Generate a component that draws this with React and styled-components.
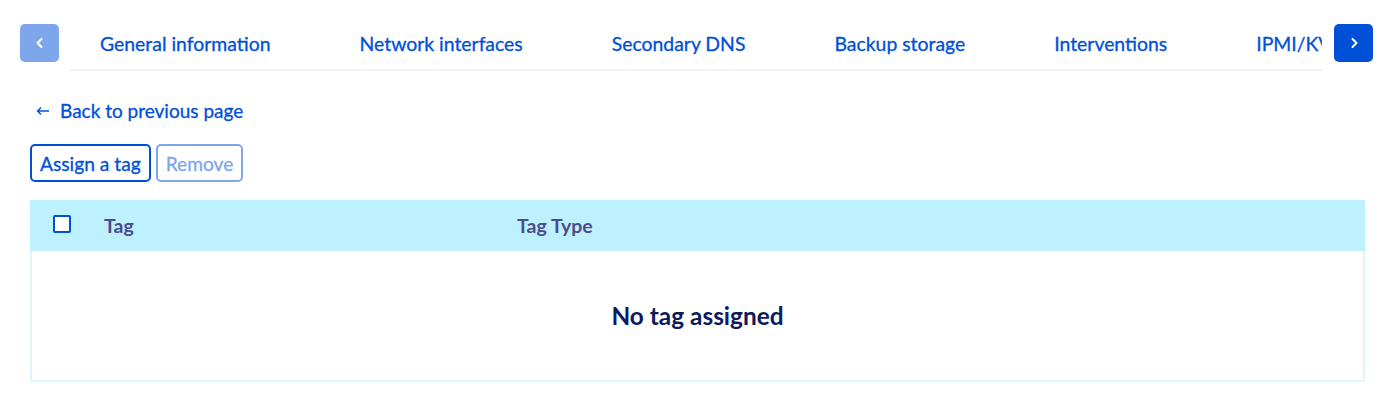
import React from "react";
import styled, { createGlobalStyle } from "styled-components";

const GlobalStyle = createGlobalStyle`
  * { box-sizing: border-box; }
  body {
    margin: 0;
    background: #fff;
    font-family: Lato, "Noto Sans", sans-serif;
  }
`;

const Page = styled.div`
  width: 1400px;
  height: 410px;
  padding: 24px 27px 0 20px;
`;

const TabBar = styled.div`
  display: flex;
  align-items: flex-start;
  height: 48px;
`;

const ArrowButton = styled.button`
  flex: none;
  width: 39px;
  height: 38px;
  border: none;
  border-radius: 5px;
  padding: 0;
  display: flex;
  align-items: center;
  justify-content: center;
  background: ${(p) => (p.$disabled ? "#7ea6eb" : "#0050d7")};
  color: #fff;
`;

const TabStrip = styled.div`
  flex: 1;
  margin: 0 12px 0 11px;
  overflow: hidden;
  display: flex;
  gap: 89px;
  padding-left: 30px;
  height: 47px;
  border-bottom: 2px solid #eff4fa;
  white-space: nowrap;
`;

const Tab = styled.a`
  flex: none;
  font-size: 19.4px;
  color: #0050d7;
  line-height: 40px;
  -webkit-text-stroke: 0.3px #0050d7;
  text-decoration: none;
`;

const Content = styled.div`
  padding-left: 10px;
`;

const BackLink = styled.a`
  display: flex;
  align-items: center;
  gap: 10px;
  margin: 26px 0 0 6px;
  font-size: 19px;
  color: #0050d7;
  -webkit-text-stroke: 0.3px #0050d7;
  line-height: 26px;
`;

const Actions = styled.div`
  display: flex;
  gap: 5px;
  margin-top: 20px;
`;

const OutlineButton = styled.button`
  height: 38px;
  padding: 0 8px;
  border: 2px solid ${(p) => (p.$disabled ? "#7ea6eb" : "#0050d7")};
  border-radius: 5px;
  background: #fff;
  color: ${(p) => (p.$disabled ? "#7ea6eb" : "#0050d7")};
  -webkit-text-stroke: 0.3px ${(p) => (p.$disabled ? "#7ea6eb" : "#0050d7")};
  font-family: inherit;
  font-size: 19.2px;
`;

const Table = styled.div`
  margin-top: 18px;
  width: 1335px;
  border: 2px solid #dff6fe;
`;

const HeaderRow = styled.div`
  display: grid;
  grid-template-columns: 74px 413px 1fr;
  align-items: center;
  height: 51px;
  margin: -2px -2px 0;
  background: #bdf1fe;
  color: #4d4c8f;
  font-size: 19.5px;
  font-weight: 700;
`;

const CheckCell = styled.div`
  display: flex;
  padding-left: 23px;
`;

const Checkbox = styled.span`
  width: 18px;
  height: 18px;
  margin-top: -4px;
  border: 2px solid #0050d7;
  border-radius: 2px;
  background: #fff;
`;

const Empty = styled.div`
  height: 129px;
  display: flex;
  align-items: center;
  justify-content: center;
  padding-bottom: 1px;
  font-size: 24.4px;
  font-weight: 700;
  color: #0d1b5c;
`;

const Chevron = ({ dir }) => (
  <svg width="10" height="12" viewBox="0 0 10 12" fill="none">
    <path
      d={dir === "left" ? "M6.5 2 L2.5 6 L6.5 10" : "M3.5 2 L7.5 6 L3.5 10"}
      stroke="#fff"
      strokeWidth="2"
      strokeLinecap="round"
      strokeLinejoin="round"
    />
  </svg>
);

const tabs = [
  "General information",
  "Network interfaces",
  "Secondary DNS",
  "Backup storage",
  "Interventions",
  "IPMI/KVM",
];

export default function App() {
  return (
    <Page>
      <GlobalStyle />
      <TabBar>
        <ArrowButton $disabled>
          <Chevron dir="left" />
        </ArrowButton>
        <TabStrip>
          {tabs.map((t) => (
            <Tab key={t}>{t}</Tab>
          ))}
        </TabStrip>
        <ArrowButton>
          <Chevron dir="right" />
        </ArrowButton>
      </TabBar>
      <Content>
        <BackLink>
          <svg width="14" height="10" viewBox="0 0 14 10" fill="none">
            <path d="M13 5 H1.5 M5 1.5 L1.5 5 L5 8.5" stroke="#0050d7" strokeWidth="1.4" />
          </svg>
          Back to previous page
        </BackLink>
        <Actions>
          <OutlineButton>Assign a tag</OutlineButton>
          <OutlineButton $disabled>Remove</OutlineButton>
        </Actions>
        <Table>
          <HeaderRow>
            <CheckCell>
              <Checkbox />
            </CheckCell>
            <span>Tag</span>
            <span>Tag Type</span>
          </HeaderRow>
          <Empty>No tag assigned</Empty>
        </Table>
      </Content>
    </Page>
  );
}
